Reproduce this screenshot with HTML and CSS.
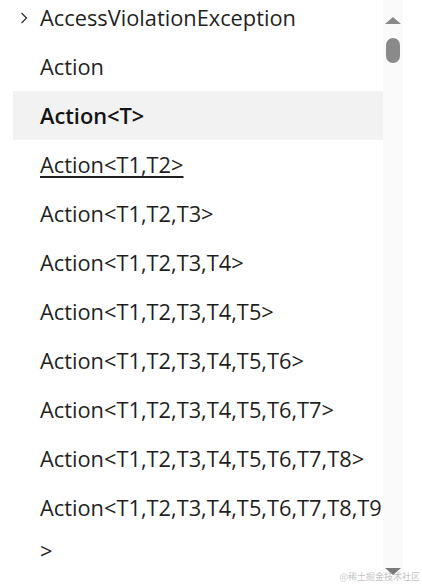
FILE: index.html
```html
<!DOCTYPE html>
<html lang="en">
<head>
<meta charset="utf-8">
<title>Type list</title>
<link rel="stylesheet" href="styles.css">
</head>
<body>
<div class="pane">
  <ul class="tree">
    <li class="item">
      <span class="twisty"><svg class="chev" width="8" height="12" viewBox="0 0 8 12"><polyline points="1.5,1 6.5,6 1.5,11" fill="none" stroke="#333" stroke-width="1.3"/></svg></span>
      <span class="label">AccessViolationException</span>
    </li>
    <li class="item"><span class="twisty"></span><span class="label">Action</span></li>
    <li class="item selected"><span class="twisty"></span><span class="label">Action&lt;T&gt;</span></li>
    <li class="item focused"><span class="twisty"></span><span class="label">Action&lt;T1,T2&gt;</span></li>
    <li class="item"><span class="twisty"></span><span class="label">Action&lt;T1,T2,T3&gt;</span></li>
    <li class="item"><span class="twisty"></span><span class="label">Action&lt;T1,T2,T3,T4&gt;</span></li>
    <li class="item"><span class="twisty"></span><span class="label">Action&lt;T1,T2,T3,T4,T5&gt;</span></li>
    <li class="item"><span class="twisty"></span><span class="label">Action&lt;T1,T2,T3,T4,T5,T6&gt;</span></li>
    <li class="item"><span class="twisty"></span><span class="label">Action&lt;T1,T2,T3,T4,T5,T6,T7&gt;</span></li>
    <li class="item"><span class="twisty"></span><span class="label">Action&lt;T1,T2,T3,T4,T5,T6,T7,T8&gt;</span></li>
    <li class="item"><span class="twisty"></span><span class="label">Action&lt;T1,T2,T3,T4,T5,T6,T7,T8,T9&gt;</span></li>
  </ul>
  <div class="scrollbar">
    <svg class="arrow" width="16" height="7" viewBox="0 0 16 7"><polygon points="8,0 16,7 0,7" fill="#8a8a8a"/></svg>
    <div class="thumb"></div>
    <div class="track-rest"></div>
    <svg class="arrow" width="16" height="7" viewBox="0 0 16 7"><polygon points="0,0 16,0 8,7" fill="#7a7a7a"/></svg>
  </div>
</div>
<div class="watermark">@稀土掘金技术社区</div>
</body>
</html>
```
FILE: styles.css
```css
html, body {
  margin: 0;
  padding: 0;
  background: #ffffff;
}

body {
  font-family: "Open Sans", "Noto Sans", "Noto Sans CJK SC", sans-serif;
  overflow: hidden;
}

.pane {
  display: flex;
  height: 584px;
  overflow: hidden;
}

.tree {
  list-style: none;
  margin: -7px 0 0 13px;
  padding: 0;
  width: 370px;
  flex: none;
}

.item {
  display: flex;
  align-items: flex-start;
  padding: 3px 0;
  font-size: 21.8px;
  line-height: 43px;
  color: #1f1f1f;
}

.twisty {
  flex: none;
  width: 27px;
  height: 43px;
  display: flex;
  align-items: center;
}

.chev {
  margin-left: 7px;
}

.label {
  min-width: 0;
  overflow-wrap: anywhere;
}

.item.selected {
  background: #f2f2f2;
  font-weight: 600;
  color: #141414;
}

.item.focused .label {
  text-decoration: underline;
  text-decoration-thickness: 2px;
  text-underline-offset: 3px;
}

.scrollbar {
  flex: none;
  width: 20px;
  background: #fafafa;
  display: flex;
  flex-direction: column;
  align-items: center;
  padding: 17px 0 9px;
  box-sizing: border-box;
}

.arrow {
  display: block;
  flex: none;
}

.thumb {
  flex: none;
  width: 14px;
  height: 25px;
  margin-top: 14px;
  border-radius: 7px;
  background: #8a8a8a;
}

.track-rest {
  flex: 1;
}

.watermark {
  position: absolute;
  right: 2px;
  bottom: 1px;
  font-family: "Noto Sans CJK SC", sans-serif;
  font-size: 9px;
  line-height: 12px;
  color: rgba(140, 140, 140, 0.55);
}
```
